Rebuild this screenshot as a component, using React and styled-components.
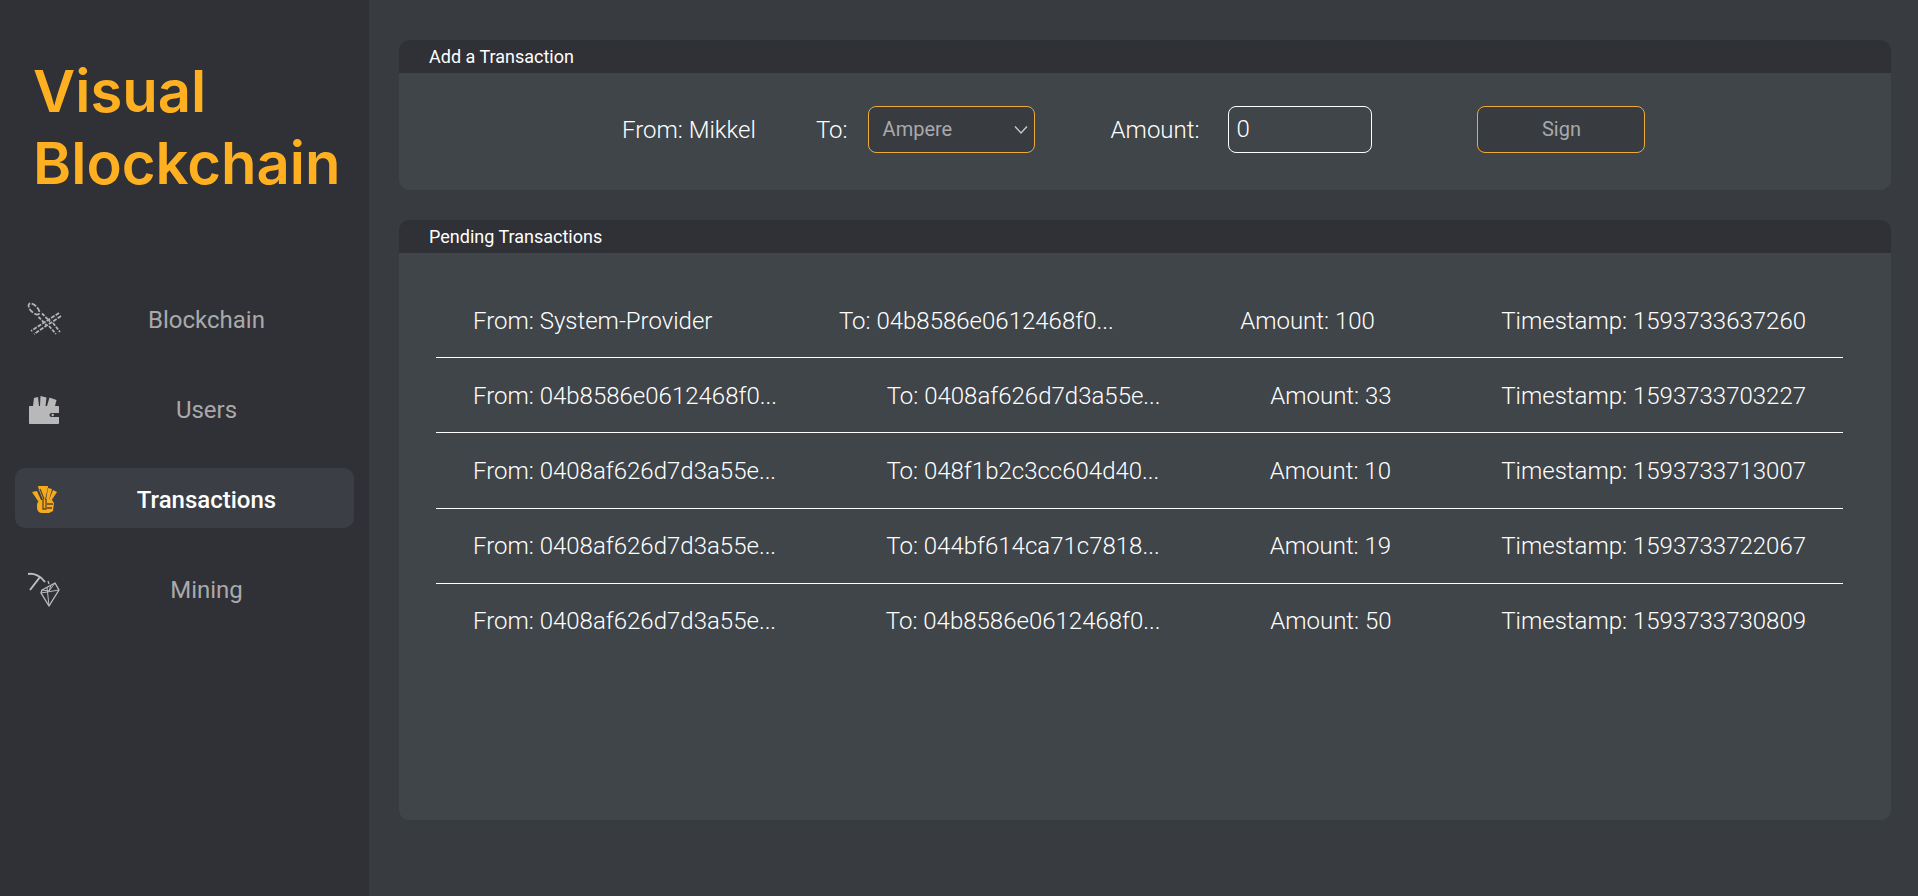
import React from "react";
import styled, { createGlobalStyle } from "styled-components";

const Global = createGlobalStyle`
  html, body { margin: 0; padding: 0; background: #383c41; }
  * { box-sizing: border-box; }
  body { font-family: Roboto, "Liberation Sans", sans-serif; color: #fff; }
`;

const Page = styled.div`
  display: flex;
  width: 1918px;
  height: 896px;
  overflow: hidden;
  background: #383c41;
`;

const Sidebar = styled.aside`
  width: 369px;
  flex: none;
  background: #303136;
  display: flex;
  flex-direction: column;
  padding: 55px 15px 0;
`;

const Logo = styled.h1`
  margin: 0 0 89px 18px;
  font-family: Inter, sans-serif;
  font-weight: 600;
  font-size: 58px;
  line-height: 72px;
  color: #ffb020;
  white-space: pre-line;
`;

const Nav = styled.nav`
  display: flex;
  flex-direction: column;
  gap: 30px;
`;

const NavItem = styled.div`
  position: relative;
  height: 60px;
  border-radius: 10px;
  display: flex;
  align-items: center;
  justify-content: center;
  padding: 4px 0 0 44px;
  font-size: 24px;
  font-weight: ${(p) => (p.$active ? 500 : 400)};
  color: ${(p) => (p.$active ? "#ffffff" : "#a9a9ab")};
  background: ${(p) => (p.$active ? "#3b3e44" : "transparent")};
`;

const NavIcon = styled.svg`
  position: absolute;
  left: 13px;
  top: 15px;
  width: 32px;
  height: 32px;
  overflow: visible;
`;

const Main = styled.main`
  flex: 1;
  padding: 40px 27px 0 30px;
  display: flex;
  flex-direction: column;
  gap: 30px;
`;

const Panel = styled.section`
  background: #40454a;
  border-radius: 10px;
  overflow: hidden;
  height: ${(p) => p.$height}px;
`;

const PanelHeader = styled.header`
  height: 33px;
  background: #303136;
  padding-left: 30px;
  font-size: 18px;
  font-weight: 400;
  line-height: 33px;
`;

const FormRow = styled.div`
  height: 113px;
  display: flex;
  align-items: center;
  font-size: 24px;
  font-weight: 300;
`;

const Label = styled.span`
  flex: none;
  margin-left: ${(p) => p.$left}px;
`;

const Select = styled.div`
  position: relative;
  flex: none;
  width: 167px;
  height: 47px;
  margin-left: 20px;
  border: 1px solid #eeaa33;
  border-radius: 8px;
  background: #383c41;
  color: #a9a9ab;
  font-size: 20px;
  font-weight: 400;
  line-height: 45px;
  padding-left: 14px;
`;

const Chevron = styled.svg`
  position: absolute;
  right: 6px;
  top: 16px;
  width: 14px;
  height: 14px;
`;

const AmountBox = styled.div`
  flex: none;
  width: 144px;
  height: 47px;
  margin-left: 29px;
  border: 1px solid #fff;
  border-radius: 8px;
  font-size: 24px;
  font-weight: 300;
  line-height: 45px;
  padding-left: 7px;
`;

const SignButton = styled.button`
  flex: none;
  width: 168px;
  height: 47px;
  margin-left: 105px;
  padding: 0 0 2px;
  border: 1px solid #eeaa33;
  border-radius: 8px;
  background: #383c41;
  color: #a9a9ab;
  font-family: inherit;
  font-size: 20px;
`;

const List = styled.div`
  padding: 30px 48px 0 37px;
`;

const TxRow = styled.div`
  height: 75.2px;
  padding: 1px 37px 0;
  display: flex;
  align-items: center;
  justify-content: space-between;
  font-size: 24px;
  font-weight: 300;
  white-space: nowrap;
  border-bottom: 1px solid ${(p) => (p.$last ? "transparent" : "#ffffff")};
`;

const ChainIcon = () => (
  <NavIcon viewBox="0 0 32 32" fill="none" stroke="#b4b4b6" strokeWidth="1.8">
    <ellipse cx="6" cy="6" rx="7" ry="3.400" transform="rotate(45 6 6)" strokeDasharray="5 1.500" />
    <path strokeDasharray="3.500 1.300" d="M10.500 14l8 8M14 10.500l8 8" />
    <path strokeDasharray="3.500 1.300" d="M21 23l7 8M25 20l7 9" />
    <path strokeDasharray="4 1.300" d="M31 10L3 28M33 13L6 31" />
  </NavIcon>
);

const WalletIcon = () => (
  <NavIcon viewBox="0 0 32 32">
    <path fill="#b8b8ba" d="M5 13l1-8 4-1 1 9z" />
    <path fill="#b8b8ba" d="M12 13l.5-10 6 1.500-1 8.500z" />
    <path fill="#b8b8ba" d="M19 13l2.500-8.500 7 2.500-1.500 6z" />
    <path fill="#b8b8ba" d="M1 14c0-.7.3-1 1-1h28c.7 0 1 .3 1 1v6h-7.500a2 2 0 000 4H31v6c0 .7-.3 1-1 1H2c-.7 0-1-.3-1-1z" />
    <circle cx="24.700" cy="22" r="1.200" fill="#b8b8ba" />
  </NavIcon>
);

const FistIcon = () => (
  <NavIcon viewBox="0 0 32 32">
    <path fill="#f4ab1f" d="M4 9l5-1 4 9-3 1z" />
    <path fill="#f4ab1f" d="M10 3h10v1l-3 13h-2l-4-10z" />
    <path fill="#f4ab1f" d="M20 5l4 1-3 11h-3z" />
    <path fill="#f4ab1f" d="M25 7l4 2-6 9-2-1z" />
    <path fill="#f4ab1f" d="M11 17h13l2 3-1 8-4 2H14c-3 0-5-2-5-6s1-5 2-7z" />
    <path fill="none" stroke="#5b4620" strokeWidth="1.300" d="M15 16v10h3V16M19 21h6M19 25h5M12 6l4 10" />
  </NavIcon>
);

const PickIcon = () => (
  <NavIcon viewBox="0 0 32 32" fill="none" stroke="#bdbdbf" strokeLinejoin="round">
    <path strokeWidth="2" d="M0 1c6-1 13 2 17 8M12 4L2 17" />
    <path strokeWidth="1.200" d="M20 8l1 3" />
    <path strokeWidth="1.400" d="M14 17l13-7 4 7-10 16-8-13z" />
    <path strokeWidth="1" d="M13 20l18-3M19 14l2 19M23 12l-2 6 6-8M14 17l7 1" />
  </NavIcon>
);

const navItems = [
  { label: "Blockchain", icon: <ChainIcon /> },
  { label: "Users", icon: <WalletIcon /> },
  { label: "Transactions", icon: <FistIcon />, active: true },
  { label: "Mining", icon: <PickIcon /> },
];

const transactions = [
  ["System-Provider", "04b8586e0612468f0...", "100", "1593733637260"],
  ["04b8586e0612468f0...", "0408af626d7d3a55e...", "33", "1593733703227"],
  ["0408af626d7d3a55e...", "048f1b2c3cc604d40...", "10", "1593733713007"],
  ["0408af626d7d3a55e...", "044bf614ca71c7818...", "19", "1593733722067"],
  ["0408af626d7d3a55e...", "04b8586e0612468f0...", "50", "1593733730809"],
];

export default function App() {
  return (
    <Page>
      <Global />
      <Sidebar>
        <Logo>{"Visual\nBlockchain"}</Logo>
        <Nav>
          {navItems.map((n) => (
            <NavItem key={n.label} $active={n.active}>
              {n.icon}
              {n.label}
            </NavItem>
          ))}
        </Nav>
      </Sidebar>
      <Main>
        <Panel $height={150}>
          <PanelHeader>Add a Transaction</PanelHeader>
          <FormRow>
            <Label $left={223}>From: Mikkel</Label>
            <Label $left={60}>To:</Label>
            <Select>
              Ampere
              <Chevron viewBox="0 0 14 14" fill="none" stroke="#c9c9cb" strokeWidth="1.4">
                <path d="M1 3.500l6 6.500 6-6.500" />
              </Chevron>
            </Select>
            <Label $left={76}>Amount:</Label>
            <AmountBox>0</AmountBox>
            <SignButton>Sign</SignButton>
          </FormRow>
        </Panel>
        <Panel $height={600}>
          <PanelHeader>Pending Transactions</PanelHeader>
          <List>
            {transactions.map((t, i) => (
              <TxRow key={t[3]} $last={i === transactions.length - 1}>
                <span>From: {t[0]}</span>
                <span>To: {t[1]}</span>
                <span>Amount: {t[2]}</span>
                <span>Timestamp: {t[3]}</span>
              </TxRow>
            ))}
          </List>
        </Panel>
      </Main>
    </Page>
  );
}
